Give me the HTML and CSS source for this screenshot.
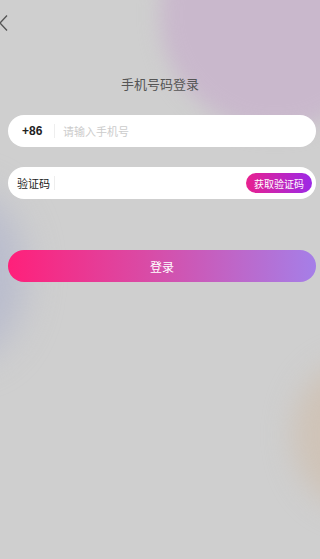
FILE: index.html
```html
<!DOCTYPE html>
<html>
<head>
  <title>手机号码登录</title>
  <link rel="stylesheet" href="styles.css">
</head>
<body>
  <div class="page">
    <div class="blob blob-purple"></div>
    <div class="blob blob-blue"></div>
    <div class="blob blob-beige"></div>

    <div class="topbar">
      <button class="back-button" title="返回">
        <svg width="10" height="18" viewBox="0 0 10 18"><path d="M8 1.5 L1 9 L8 16.5" fill="none" stroke="#555" stroke-width="1.3"/></svg>
      </button>
    </div>

    <h2 class="title">手机号码登录</h2>

    <div class="form">
      <div class="field">
        <span class="prefix prefix-bold">+86</span>
        <span class="divider"></span>
        <input type="text" class="field-input" placeholder="请输入手机号">
      </div>

      <div class="field">
        <span class="prefix">验证码</span>
        <span class="divider"></span>
        <input type="text" class="field-input">
        <button class="code-button">获取验证码</button>
      </div>

      <button class="login-button">登录</button>
    </div>
  </div>
</body>
</html>
```

FILE: styles.css
```css
:root {
  --bg: #cfcfcf;
  --text-primary: #222222;
  --text-secondary: #555555;
  --placeholder: #cccccc;
  --font: "Noto Sans CJK SC", "Noto Sans", sans-serif;
}

* {
  margin: 0;
  padding: 0;
  box-sizing: border-box;
}

body {
  width: 320px;
  height: 559px;
  overflow: hidden;
  font-family: var(--font);
  background: var(--bg);
}

.page {
  position: relative;
  height: 559px;
  overflow: hidden;
}

.blob {
  position: absolute;
  border-radius: 50%;
  filter: blur(10px);
}

.blob-purple {
  width: 230px;
  height: 230px;
  left: 160px;
  top: -100px;
  background: #c9b8cc;
}

.blob-blue {
  width: 120px;
  height: 170px;
  left: -95px;
  top: 190px;
  background: #b9bccd;
  filter: blur(18px);
}

.blob-beige {
  width: 130px;
  height: 150px;
  left: 293px;
  top: 360px;
  background: #cfc3b7;
  filter: blur(14px);
}

.topbar {
  position: relative;
  height: 44px;
  padding-top: 14px;
}

.back-button {
  background: transparent;
  border: none;
  display: block;
  margin-left: -1px;
}

.title {
  position: relative;
  margin-top: 30px;
  text-align: center;
  font-size: 13px;
  font-weight: 400;
  color: var(--text-secondary);
  line-height: 20px;
}

.form {
  position: relative;
  padding: 0 4px 0 8px;
  margin-top: 21px;
}

.field {
  display: flex;
  align-items: center;
  height: 32px;
  background: #ffffff;
  border-radius: 16px;
  padding: 0 4px 0 0;
  margin-bottom: 20px;
}

.prefix {
  width: 46px;
  padding-left: 9px;
  font-size: 11px;
  color: var(--text-primary);
}

.prefix-bold {
  padding-left: 14px;
  font-family: "Liberation Sans", sans-serif;
  font-weight: 700;
  font-size: 12px;
}

.divider {
  width: 1px;
  height: 14px;
  background: #eeeeee;
}

.field-input {
  flex: 1;
  min-width: 0;
  border: none;
  outline: none;
  background: transparent;
  padding-left: 8px;
  font-family: var(--font);
  font-size: 11px;
  color: var(--text-primary);
}

.field-input::placeholder {
  color: var(--placeholder);
}

.code-button {
  height: 20px;
  width: 66px;
  border: none;
  border-radius: 10px;
  background: linear-gradient(90deg, #e8218f, #9c29e6);
  color: #ffffff;
  font-family: var(--font);
  font-size: 10px;
}

.login-button {
  display: block;
  width: 100%;
  height: 32px;
  margin-top: 51px;
  border: none;
  border-radius: 16px;
  background: linear-gradient(90deg, #ff207a, #d94ba6 45%, #a57fe8);
  color: #ffffff;
  font-family: var(--font);
  font-size: 12px;
}
```
